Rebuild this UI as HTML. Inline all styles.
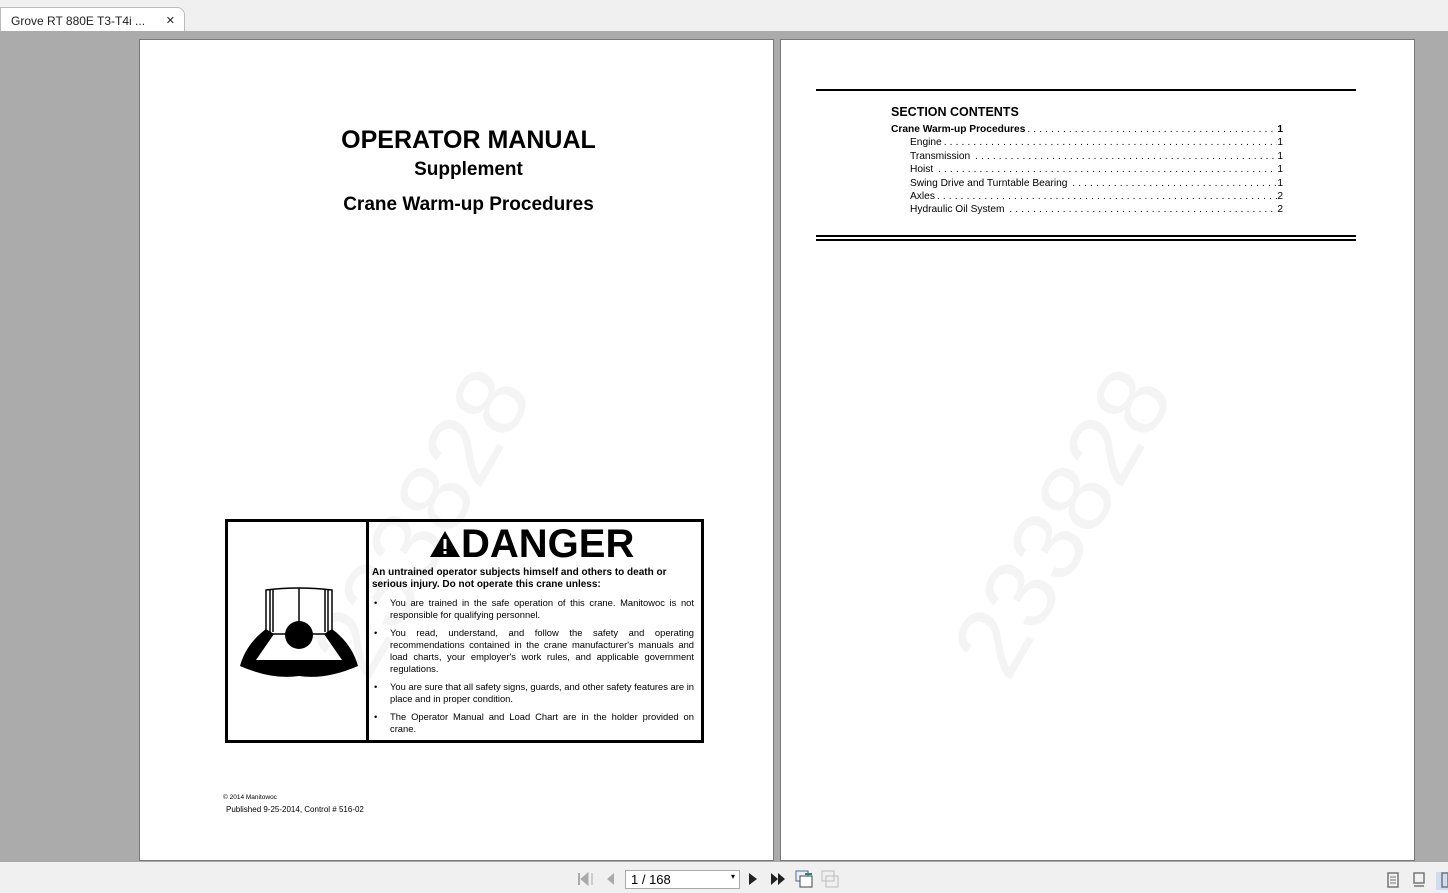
<!DOCTYPE html>
<html><head><meta charset="utf-8"><style>
*{margin:0;padding:0;box-sizing:border-box}
body{width:1448px;height:893px;background:#ababab;font-family:"Liberation Sans",Arial,sans-serif;position:relative;overflow:hidden}
.tabbar{position:absolute;left:0;top:0;width:1448px;height:31px;background:#f0f0f0}
.tab{position:absolute;left:0;top:7px;width:185px;height:24px;background:#fff;border:1px solid #bbb;border-bottom:none;border-radius:0 8px 0 0;font-size:12px;color:#222;padding:6px 0 0 10px}
.tab .x{position:absolute;right:9px;top:6px;font-size:11px}
.page{position:absolute;top:39px;height:822px;background:#fff;border:1px solid #777}
.wm{position:absolute;font-size:100px;color:rgba(0,0,0,0.045);transform:rotate(-60deg);transform-origin:center;white-space:nowrap}
.bot{position:absolute;left:0;top:862px;width:1448px;height:31px;background:#f0f0f0}
.toc{position:absolute;left:110px;font-size:10.2px;width:392px}
.row{display:flex;height:13.4px;align-items:baseline}
.row .l{white-space:nowrap}
.row .d{flex:1;overflow:hidden;white-space:nowrap;letter-spacing:3.1px;padding-left:2px}
.bul{display:flex;font-size:9.4px;line-height:12px;margin-top:6px}
.bul .b{width:18px;flex:none;padding-left:2px}
.bul .t{text-align:justify;flex:1}
</style></head><body>
<div class="tabbar"><div class="tab">Grove RT 880E T3-T4i ...<span class="x">✕</span></div></div>

<div class="page" style="left:139px;width:635px">
  <div class="wm" style="left:115px;top:425px">233828</div>
  <div style="position:absolute;left:11px;width:635px;top:86px;text-align:center;font-weight:bold;font-size:25px">OPERATOR MANUAL</div>
  <div style="position:absolute;left:11px;width:635px;top:119px;text-align:center;font-weight:bold;font-size:19px">Supplement</div>
  <div style="position:absolute;left:11px;width:635px;top:154px;text-align:center;font-weight:bold;font-size:19px">Crane Warm-up Procedures</div>
  <div style="position:absolute;left:85px;top:479px;width:479px;height:224px;border:3px solid #000">
    <div style="position:absolute;left:138px;top:0;width:3px;height:100%;background:#000"></div>
    <svg style="position:absolute;left:8px;top:62px" width="126" height="95" viewBox="0 0 126 95">
      <path d="M30 6 Q62 2 96 6 L96 50 L30 50 Z" fill="#fff" stroke="#000" stroke-width="1.5"/>
      <path d="M63 4 V50 M34 6V48 M37 6V48 M89 6V48 M92 6V48" stroke="#000" stroke-width="1.5"/>
      <circle cx="63" cy="51" r="14" fill="#000"/>
      <path d="M4 82 Q10 60 30 45 L38 50 L20 76 L106 76 L88 50 L96 45 Q116 60 122 82 Q90 96 63 92 Q36 96 4 82 Z" fill="#000"/>
    </svg>
    <div style="position:absolute;left:201px;top:0;font-size:40px;font-weight:bold;line-height:44px">
      <svg width="32" height="28" viewBox="0 0 32 28" style="vertical-align:-1px"><path d="M16 1 L31 27 H1 Z" fill="#000"/><rect x="14.5" y="9" width="3" height="10" fill="#fff"/><rect x="14.5" y="21" width="3" height="3" fill="#fff"/></svg>DANGER</div>
    <div style="position:absolute;left:144px;top:45px;width:322px">
      <div style="font-weight:bold;font-size:10px;line-height:12px">An untrained operator subjects himself and others to death or serious injury. Do not operate this crane unless:</div>
      <div class="bul"><span class="b">•</span><span class="t">You are trained in the safe operation of this crane. Manitowoc is not responsible for qualifying personnel.</span></div>
      <div class="bul"><span class="b">•</span><span class="t">You read, understand, and follow the safety and operating recommendations contained in the crane manufacturer's manuals and load charts, your employer's work rules, and applicable government regulations.</span></div>
      <div class="bul"><span class="b">•</span><span class="t">You are sure that all safety signs, guards, and other safety features are in place and in proper condition.</span></div>
      <div class="bul"><span class="b">•</span><span class="t">The Operator Manual and Load Chart are in the holder provided on crane.</span></div>
    </div>
  </div>
  <div style="position:absolute;left:83px;top:754px;font-size:6.5px">© 2014 Manitowoc</div>
  <div style="position:absolute;left:86px;top:765px;font-size:8px">Published 9-25-2014, Control # 516-02</div>
</div>

<div class="page" style="left:780px;width:635px">
  <div class="wm" style="left:115px;top:425px">233828</div>
  <div style="position:absolute;left:35px;top:49px;width:540px;height:2px;background:#000"></div>
  <div style="position:absolute;left:110px;top:65px;font-weight:bold;font-size:12.5px">SECTION CONTENTS</div>
  <div class="toc" style="top:84px">
    <div class="row"><span class="l" style="font-weight:bold">Crane Warm-up Procedures</span><span class="d">............................................................................</span><span style="font-weight:bold">1</span></div>
    <div class="row" style="padding-left:19px"><span class="l">Engine</span><span class="d">..................................................................................................</span><span>1</span></div>
    <div class="row" style="padding-left:19px"><span class="l">Transmission&nbsp;</span><span class="d">..................................................................................................</span><span>1</span></div>
    <div class="row" style="padding-left:19px"><span class="l">Hoist&nbsp;</span><span class="d">..................................................................................................</span><span>1</span></div>
    <div class="row" style="padding-left:19px"><span class="l">Swing Drive and Turntable Bearing&nbsp;</span><span class="d">..................................................................................................</span><span>1</span></div>
    <div class="row" style="padding-left:19px"><span class="l">Axles</span><span class="d">..................................................................................................</span><span>2</span></div>
    <div class="row" style="padding-left:19px"><span class="l">Hydraulic Oil System&nbsp;</span><span class="d">..................................................................................................</span><span>2</span></div>
  </div>
  <div style="position:absolute;left:35px;top:195px;width:540px;height:2px;background:#000"></div>
  <div style="position:absolute;left:35px;top:199px;width:540px;height:2px;background:#000"></div>
</div>

<div class="bot">
  <svg style="position:absolute;left:578px;top:10px" width="40" height="14"><rect x="0" y="1" width="2" height="12" fill="#aaa"/><path d="M10 1 L3 7 L10 13Z M14 1 V13" stroke="#aaa" fill="#aaa"/><path d="M36 1 L29 7 L36 13Z" fill="#aaa"/></svg>
  <div style="position:absolute;left:625px;top:8px;width:115px;height:19px;background:#fff;border:1px solid #aaa;font-size:13px;padding:1px 0 0 5px">1 / 168<span style="position:absolute;right:4px;top:1px;font-size:8px">▾</span></div>
  <svg style="position:absolute;left:748px;top:10px" width="40" height="14"><path d="M1 1 L9 7 L1 13Z" fill="#222"/><path d="M23 1 L30 7 L23 13Z M30 1 L37 7 L30 13Z" fill="#222"/></svg>
  <svg style="position:absolute;left:795px;top:8px" width="45" height="18"><rect x="1" y="1" width="12" height="10" fill="none" stroke="#3a6fb0"/><rect x="5" y="6" width="12" height="11" fill="#fff" stroke="#444"/><path d="M10 4 h7" stroke="#2a8a6a" stroke-width="2"/><rect x="27" y="1" width="12" height="10" fill="none" stroke="#bbb"/><rect x="31" y="6" width="12" height="11" fill="none" stroke="#bbb"/></svg>
  <svg style="position:absolute;left:1386px;top:10px" width="62" height="18"><rect x="2" y="1" width="10" height="14" fill="none" stroke="#777" stroke-width="1.5"/><path d="M4 5h6M4 8h6M4 11h6" stroke="#777"/><rect x="28" y="1" width="10" height="10" fill="none" stroke="#777" stroke-width="1.5"/><path d="M28 14h10" stroke="#777" stroke-width="1.5"/><rect x="50" y="-1" width="12" height="20" fill="#cddcf0"/><rect x="56" y="1" width="6" height="14" fill="none" stroke="#777" stroke-width="1.5"/></svg>
</div>
</body></html>
